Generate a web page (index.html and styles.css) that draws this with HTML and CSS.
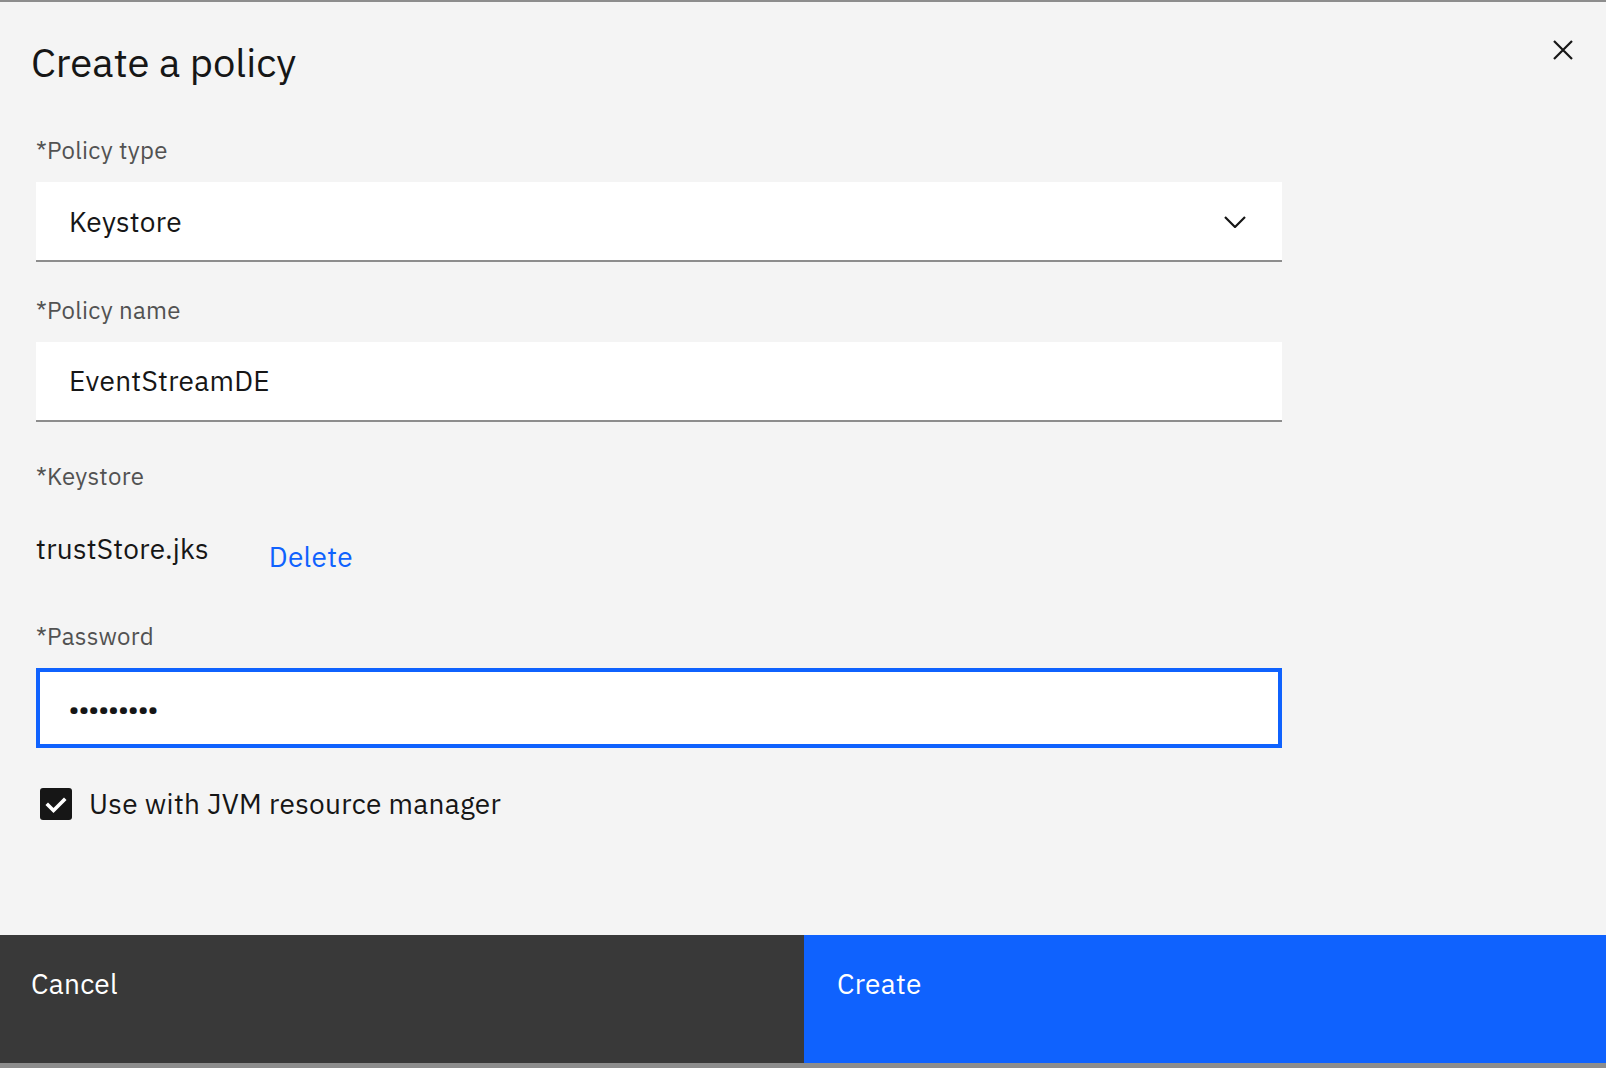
FILE: index.html
```html
<!DOCTYPE html>
<html lang="en">
<head>
<meta charset="utf-8">
<title>Create a policy</title>
<link rel="stylesheet" href="styles.css">
</head>
<body>
<div class="modal">
  <header class="modal-header">
    <h2 class="modal-title">Create a policy</h2>
    <button class="close-btn" aria-label="Close">
      <svg width="22" height="22" viewBox="0 0 22 22"><path d="M2 2 L20 20 M20 2 L2 20" stroke="#161616" stroke-width="2.2" fill="none"/></svg>
    </button>
  </header>
  <div class="modal-body">
    <div class="field">
      <label class="label">*Policy type</label>
      <div class="select">
        <span class="select-value">Keystore</span>
        <svg class="chevron" width="22" height="12" viewBox="0 0 22 12"><path d="M1 1 L11 11 L21 1" stroke="#161616" stroke-width="2.2" fill="none"/></svg>
      </div>
    </div>
    <div class="field">
      <label class="label">*Policy name</label>
      <div class="text-input">EventStreamDE</div>
    </div>
    <div class="field field-keystore">
      <label class="label">*Keystore</label>
      <div class="file-row">
        <span class="file-name">trustStore.jks</span>
        <a class="delete-link">Delete</a>
      </div>
    </div>
    <div class="field field-password">
      <label class="label">*Password</label>
      <div class="text-input focused"><span class="dots">•••••••••</span></div>
    </div>
    <div class="checkbox-row">
      <span class="checkbox">
        <svg width="32" height="32" viewBox="0 0 32 32"><path d="M8 17 L13.5 22.5 L24 12" stroke="#ffffff" stroke-width="3.6" fill="none" stroke-linecap="square"/></svg>
      </span>
      <span class="checkbox-label">Use with JVM resource manager</span>
    </div>
  </div>
  <footer class="modal-footer">
    <button class="btn btn-secondary">Cancel</button>
    <button class="btn btn-primary">Create</button>
  </footer>
</div>
</body>
</html>
```
FILE: styles.css
```css
* { box-sizing: border-box; }
html, body { margin: 0; padding: 0; }
body {
  background: #f4f4f4;
  font-family: "IBM Plex Sans", "Noto Sans", "Open Sans", sans-serif;
  color: #161616;
}
.modal {
  height: 1068px;
  display: flex;
  flex-direction: column;
  border-top: 2px solid #8d8d8d;
  border-bottom: 5px solid #8d8d8d;
  background: #f4f4f4;
}
.modal-header {
  display: flex;
  justify-content: space-between;
  align-items: flex-start;
  padding: 36px 32px 0 31px;
}
.modal-title {
  margin: 0;
  font-size: 40px;
  line-height: 48px;
  font-weight: 400;
}
.close-btn {
  border: 0;
  background: none;
  padding: 0;
  margin-top: 1px;
  width: 22px;
  height: 22px;
  cursor: pointer;
}
.close-btn svg { display: block; }
.modal-body {
  padding: 48px 0 0 36px;
  width: 1282px;
}
.field { margin-bottom: 32px; }
.label {
  display: block;
  font-size: 24px;
  line-height: 32px;
  color: #525252;
  letter-spacing: 0.3px;
  margin-bottom: 16px;
}
.select, .text-input {
  height: 80px;
  background: #ffffff;
  border-bottom: 2px solid #8d8d8d;
  display: flex;
  align-items: center;
  padding: 0 36px 0 33px;
  font-size: 28px;
  line-height: 40px;
  letter-spacing: 0.3px;
}
.select { justify-content: space-between; }
.select-value { padding-top: 1px; }
.chevron { display: block; margin-top: 2px; }
.field-keystore { margin-top: 38px; margin-bottom: 43px; }
.field-keystore .label { margin-bottom: 37px; }
.file-row {
  display: flex;
  align-items: flex-start;
  font-size: 28px;
  line-height: 40px;
  letter-spacing: 0.3px;
}
.delete-link {
  color: #0f62fe;
  margin-top: 8px;
  margin-left: 60px;
  cursor: pointer;
}
.field-password { margin-bottom: 36px; }
.text-input.focused {
  border: 4px solid #0f62fe;
  padding-left: 29px;
}
.dots {
  font-size: 23px;
  font-weight: 700;
  letter-spacing: 0;
  padding-top: 0;
}
.checkbox-row {
  display: flex;
  align-items: center;
  padding-left: 4px;
  height: 40px;
}
.checkbox {
  width: 32px;
  height: 32px;
  background: #161616;
  border-radius: 3px;
  display: block;
}
.checkbox svg { display: block; }
.checkbox-label {
  margin-left: 17px;
  font-size: 28px;
  line-height: 40px;
  letter-spacing: 0.3px;
}
.modal-footer {
  margin-top: auto;
  display: grid;
  grid-template-columns: 804px 1fr;
  height: 128px;
}
.btn {
  border: 0;
  margin: 0;
  text-align: left;
  font-family: inherit;
  font-size: 28px;
  line-height: 40px;
  letter-spacing: 0.3px;
  color: #ffffff;
  padding: 29px 32px 0 31px;
  display: flex;
  align-items: flex-start;
}
.btn-secondary { background: #393939; }
.btn-primary { background: #0f62fe; padding-left: 33px; }
```
